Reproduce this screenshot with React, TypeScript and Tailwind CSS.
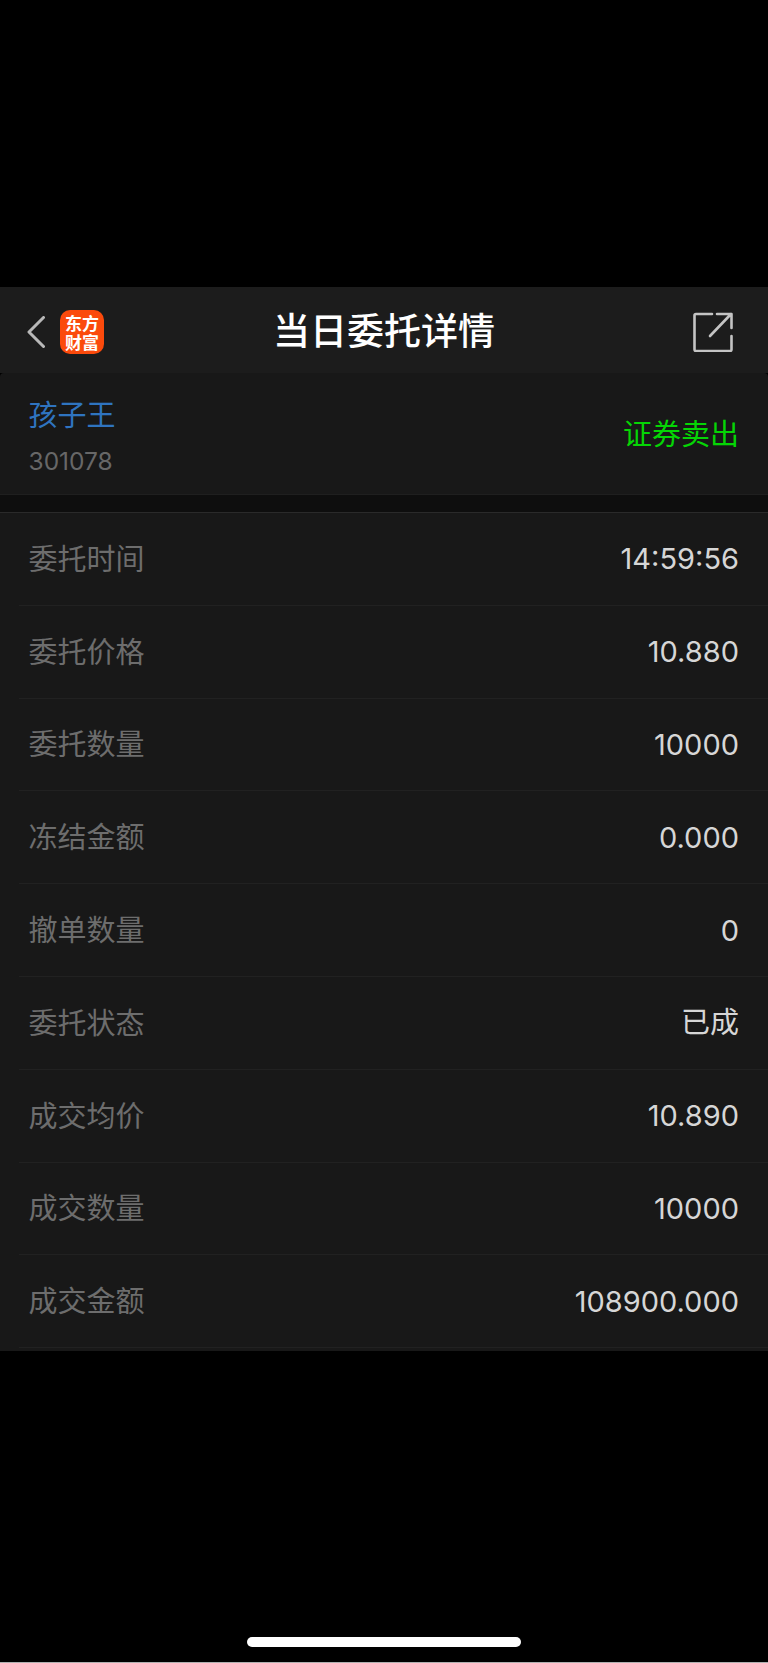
const rows: [string, string][] = [
  ["委托时间", "14:59:56"],
  ["委托价格", "10.880"],
  ["委托数量", "10000"],
  ["冻结金额", "0.000"],
  ["撤单数量", "0"],
  ["委托状态", "已成"],
  ["成交均价", "10.890"],
  ["成交数量", "10000"],
  ["成交金额", "108900.000"],
];

const font = "font-['Inter','Noto_Sans_CJK_SC',sans-serif]";

export default function App() {
  return (
    <div className={`w-[768px] h-[1663px] bg-black flex flex-col overflow-hidden ${font}`}>
      <div className="h-[287px] shrink-0" />
      <header className="h-[86px] shrink-0 bg-[#1c1c1c] grid grid-cols-[1fr_auto_1fr] items-center px-[27px] pt-[4px]">
        <div className="flex items-center gap-[15px]">
          <svg width="18" height="32" viewBox="0 0 18 32" fill="none" stroke="#b8b8b8" strokeWidth="3" strokeLinecap="round" strokeLinejoin="round">
            <path d="M16.5 1.5 2 16l14.5 14.5" />
          </svg>
          <div className="w-[44px] h-[44px] rounded-[10px] bg-[#fb4a0c] flex items-center justify-center">
            <span className="w-[36px] text-center text-white font-bold text-[17px] leading-[19px] font-['Noto_Sans_CJK_SC',sans-serif]">东方财富</span>
          </div>
        </div>
        <div className="text-white text-[37px] font-medium leading-[44px]">当日委托详情</div>
        <svg className="justify-self-end mr-[8px]" width="40" height="40" viewBox="0 0 40 40" fill="none" stroke="#c4c4c4" strokeWidth="2.6" strokeLinecap="round" strokeLinejoin="round">
          <path d="M19 2H3a1.5 1.5 0 0 0-1.5 1.5v34A1.5 1.5 0 0 0 3 39h34a1.5 1.5 0 0 0 1.5-1.5V24" />
          <path d="M17 24 38 2M24 2h14.5v14" />
        </svg>
      </header>
      <section className="h-[122px] shrink-0 bg-[#181818] rounded-t-[4px] border-b border-[#1f1f1f] flex items-center justify-between pl-[28.5px] pr-[29px]">
        <div className="flex flex-col pt-[5px]">
          <span className="text-[#2f74c0] text-[29px] leading-[38px] mb-[12px]">孩子王</span>
          <span className="text-[#676767] text-[24.5px] leading-[28px]">301078</span>
        </div>
        <span className="text-[#05d505] text-[29px] leading-[36px] mt-[2px]">证券卖出</span>
      </section>
      <div className="h-[17px] shrink-0 bg-[#0e0e0e]" />
      <section className="h-[839px] shrink-0 bg-[#181818] border-t border-[#2a2a2a] pl-[19px] pb-[4px] flex flex-col">
        {rows.map(([label, value]) => (
          <div key={label} className="h-[92.8px] shrink-0 border-b border-[#212121] flex items-center justify-between pl-[9.5px] pr-[29px]">
            <span className="text-[#6d6d6d] text-[29px] leading-[36px] pt-[2px]">{label}</span>
            <span className="text-[#d6d6d6] text-[29px] leading-[36px] font-normal pt-[1px]">{value}</span>
          </div>
        ))}
      </section>
      <div className="flex-1 flex flex-col items-center justify-end pb-[15px]">
        <div className="w-[274px] h-[10px] rounded-full bg-white" />
      </div>
      <div className="h-px shrink-0 bg-[#b0b0b0]" />
    </div>
  );
}
